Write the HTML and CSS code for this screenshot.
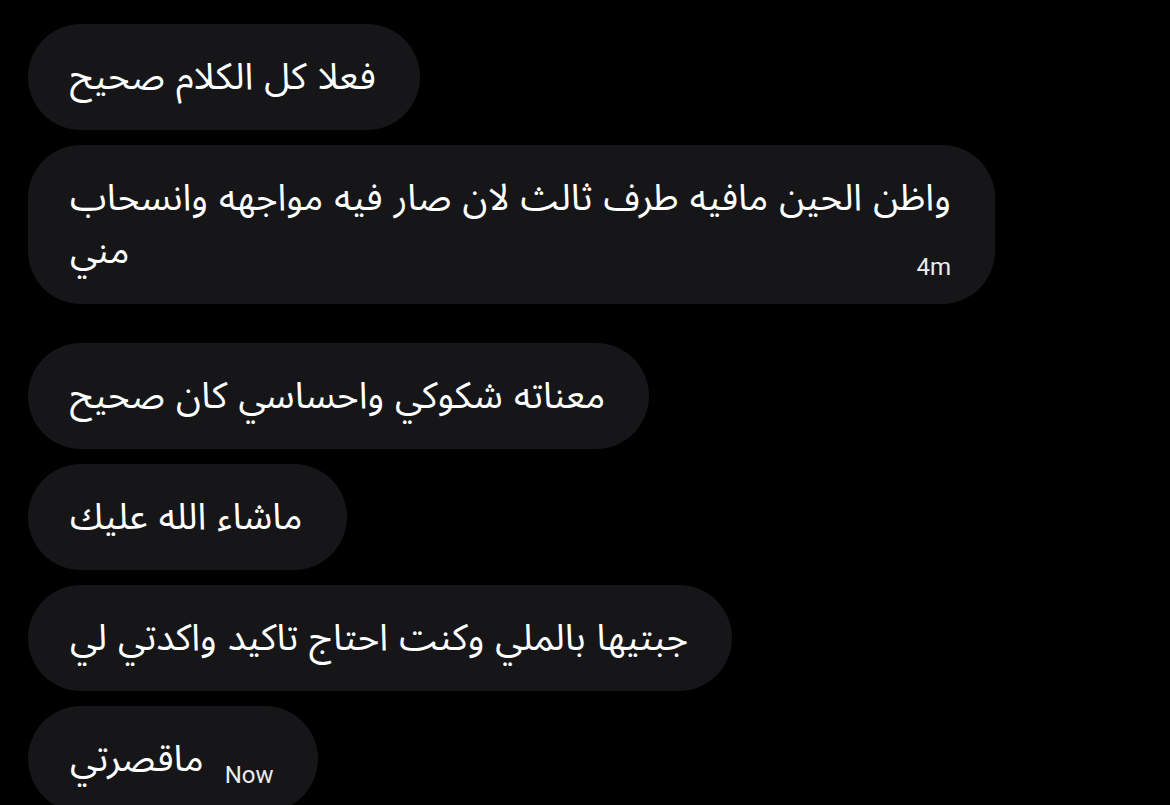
FILE: index.html
```html
<!DOCTYPE html>
<html lang="ar">
<head>
  <meta charset="UTF-8" />
  <meta name="viewport" content="width=device-width, initial-scale=1.0" />
  <title>Messages</title>
  <link rel="stylesheet" href="styles.css">
</head>
<body>
  <main class="thread">
    <section class="msg-group">
      <div class="bubble">فعلا كل الكلام صحيح</div>
      <div class="bubble">واظن الحين مافيه طرف ثالث لان صار فيه مواجهه وانسحاب مني<span class="time">4m</span></div>
    </section>

    <section class="msg-group">
      <div class="bubble">معناته شكوكي واحساسي كان صحيح</div>
      <div class="bubble">ماشاء الله عليك</div>
      <div class="bubble">جبتيها بالملي وكنت احتاج تاكيد واكدتي لي</div>
      <div class="bubble">ماقصرتي<span class="time">Now</span></div>
    </section>
  </main>
</body>
</html>
```

FILE: styles.css
```css
body {
  margin: 0;
  background-color: #000;
  color: #fff;
  font-family: "Noto Sans Arabic", "DejaVu Sans", sans-serif;
  overflow: hidden;
}
.thread {
  display: flex;
  flex-direction: column;
  gap: 39px;
  padding: 24px 28px;
}
.msg-group {
  display: flex;
  flex-direction: column;
  align-items: flex-start;
  gap: 15px;
}
.bubble {
  background: #161618;
  border-radius: 53px;
  padding: 26.5px 44px 26.5px 42px;
  max-width: 881px;
  font-size: 37px;
  line-height: 53px;
  word-spacing: 1.5px;
  direction: ltr;
  text-align: left;
}
.bubble .time {
  float: right;
  margin: 0 0 -10px 21px;
  padding-top: 29px;
  font-family: Roboto, "Liberation Sans", sans-serif;
  font-size: 24px;
  line-height: 27px;
  word-spacing: 0;
  color: #ececec;
}
```
